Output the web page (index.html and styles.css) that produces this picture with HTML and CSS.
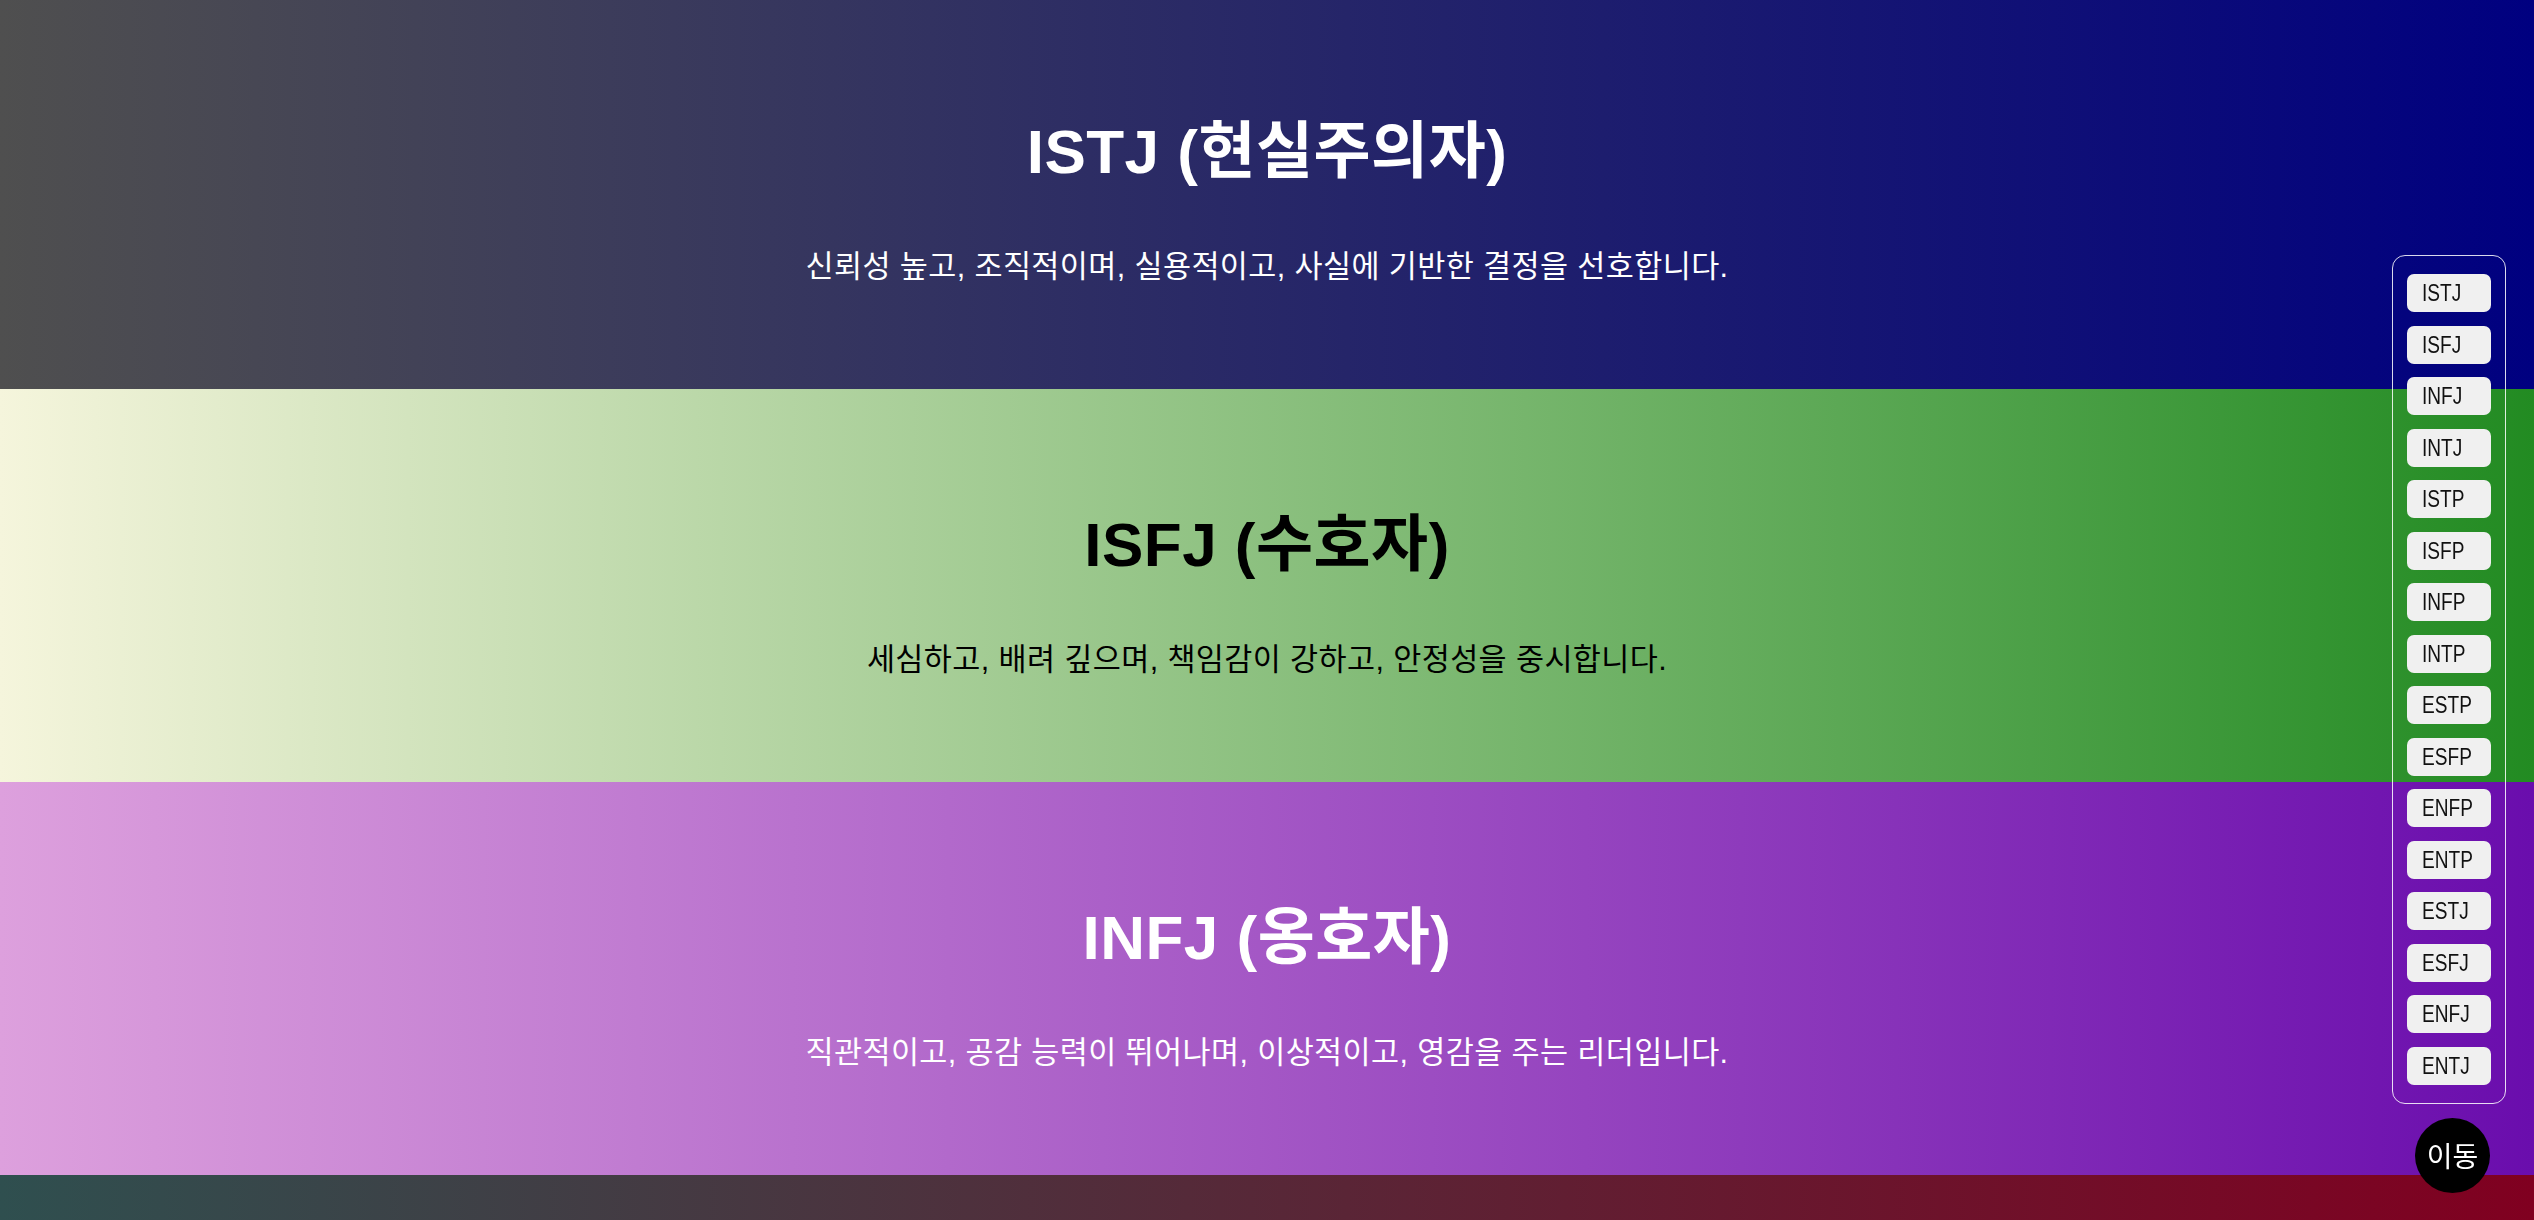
FILE: index.html
```
<!DOCTYPE html>
<html lang="ko">
<head>
<meta charset="utf-8">
<title>MBTI 유형</title>
<link rel="stylesheet" href="styles.css">
</head>
<body>
<main class="sections">
  <section class="type type-istj" id="ISTJ">
    <h1 class="type-title">ISTJ (현실주의자)</h1>
    <p class="type-desc">신뢰성 높고, 조직적이며, 실용적이고, 사실에 기반한 결정을 선호합니다.</p>
  </section>
  <section class="type type-isfj" id="ISFJ">
    <h1 class="type-title">ISFJ (수호자)</h1>
    <p class="type-desc">세심하고, 배려 깊으며, 책임감이 강하고, 안정성을 중시합니다.</p>
  </section>
  <section class="type type-infj" id="INFJ">
    <h1 class="type-title">INFJ (옹호자)</h1>
    <p class="type-desc">직관적이고, 공감 능력이 뛰어나며, 이상적이고, 영감을 주는 리더입니다.</p>
  </section>
  <section class="type type-intj" id="INTJ">
    <h1 class="type-title">INTJ (전략가)</h1>
    <p class="type-desc">독립적이고, 분석적이며, 장기적인 계획을 세우는 데 능숙합니다.</p>
  </section>
  <section class="type type-istp" id="ISTP">
    <h1 class="type-title">ISTP (장인)</h1>
    <p class="type-desc">논리적이고, 현실적이며, 문제 해결에 능숙한 실용주의자입니다.</p>
  </section>
  <section class="type type-isfp" id="ISFP">
    <h1 class="type-title">ISFP (모험가)</h1>
    <p class="type-desc">온화하고, 감각적이며, 자유로운 예술가 기질을 지녔습니다.</p>
  </section>
</main>

<nav class="type-nav">
  <button class="nav-btn"><span class="nav-label">ISTJ</span></button>
  <button class="nav-btn"><span class="nav-label">ISFJ</span></button>
  <button class="nav-btn"><span class="nav-label">INFJ</span></button>
  <button class="nav-btn"><span class="nav-label">INTJ</span></button>
  <button class="nav-btn"><span class="nav-label">ISTP</span></button>
  <button class="nav-btn"><span class="nav-label">ISFP</span></button>
  <button class="nav-btn"><span class="nav-label">INFP</span></button>
  <button class="nav-btn"><span class="nav-label">INTP</span></button>
  <button class="nav-btn"><span class="nav-label">ESTP</span></button>
  <button class="nav-btn"><span class="nav-label">ESFP</span></button>
  <button class="nav-btn"><span class="nav-label">ENFP</span></button>
  <button class="nav-btn"><span class="nav-label">ENTP</span></button>
  <button class="nav-btn"><span class="nav-label">ESTJ</span></button>
  <button class="nav-btn"><span class="nav-label">ESFJ</span></button>
  <button class="nav-btn"><span class="nav-label">ENFJ</span></button>
  <button class="nav-btn"><span class="nav-label">ENTJ</span></button>
</nav>

<button class="move-btn">이동</button>
</body>
</html>
```

FILE: styles.css
```
html, body {
  margin: 0;
  padding: 0;
}

body {
  font-family: "Liberation Sans", Arial, "Noto Sans CJK KR", sans-serif;
  overflow: hidden;
}

.sections {
  margin-top: -4px;
}

.type {
  box-sizing: border-box;
  height: 393px;
  padding: 121px 20px 0;
  text-align: center;
  color: #ffffff;
}

.type-title {
  margin: 0;
  font-size: 62px;
  line-height: 70px;
  font-weight: bold;
  letter-spacing: 0.5px;
}

.type-desc {
  margin: 62px 0 0;
  font-size: 30.5px;
  line-height: 34px;
  letter-spacing: 0.4px;
}

.type-istj { background: linear-gradient(to right, #4f4f4f, #000080); }
.type-isfj { background: linear-gradient(to right, #f5f5dc, #228b22); color: #000000; }
.type-infj { background: linear-gradient(to right, #dda0dd, #6a0dad); }
.type-intj { background: linear-gradient(to right, #2f4f4f, #800020); }
.type-istp { background: linear-gradient(to right, #708090, #8b4513); }
.type-isfp { background: linear-gradient(to right, #ffb6c1, #ff8c00); color: #000000; }

.type-nav {
  position: fixed;
  top: 255px;
  right: 28px;
  width: 114px;
  box-sizing: border-box;
  padding: 18px 14px 18px 14px;
  border: 1px solid rgba(255, 255, 255, 0.85);
  border-radius: 13px;
  display: flex;
  flex-direction: column;
  gap: 13.5px;
}

.nav-btn {
  display: block;
  width: 100%;
  height: 38px;
  padding: 0 0 0 15px;
  border: none;
  border-radius: 7px;
  background: #f0f0f0;
  color: #111111;
  text-align: left;
  font-family: "Liberation Sans Narrow", "Liberation Sans", Arial, sans-serif;
  font-size: 23px;
  line-height: 38px;
  white-space: nowrap;
}

.nav-label {
  display: inline-block;
  transform: scaleX(0.83);
  transform-origin: left center;
}

.move-btn {
  position: fixed;
  right: 44px;
  bottom: 27px;
  width: 75px;
  height: 75px;
  padding: 0;
  border: none;
  border-radius: 50%;
  background: #000000;
  color: #ffffff;
  font-family: "Noto Sans CJK KR", sans-serif;
  font-size: 28px;
  line-height: 75px;
  text-align: center;
}
```
